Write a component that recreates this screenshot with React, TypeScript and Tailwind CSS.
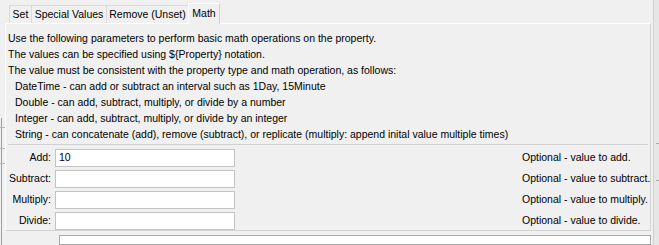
import React from "react";

const tabs = [
  { label: "Set", w: "w-[22px]" },
  { label: "Special Values", w: "w-[75px]" },
  { label: "Remove (Unset)", w: "w-[82px]" },
];

const lines = [
  { text: "Use the following parameters to perform basic math operations on the property.", indent: false },
  { text: "The values can be specified using ${Property} notation.", indent: false },
  { text: "The value must be consistent with the property type and math operation, as follows:", indent: false },
  { text: "DateTime - can add or subtract an interval such as 1Day, 15Minute", indent: true },
  { text: "Double - can add, subtract, multiply, or divide by a number", indent: true },
  { text: "Integer - can add, subtract, multiply, or divide by an integer", indent: true },
  {
    text: "String - can concatenate (add), remove (subtract), or replicate (multiply: append inital value multiple times)",
    indent: true,
  },
];

const fields = [
  { label: "Add:", value: "10", help: "Optional - value to add." },
  { label: "Subtract:", value: "", help: "Optional - value to subtract." },
  { label: "Multiply:", value: "", help: "Optional - value to multiply." },
  { label: "Divide:", value: "", help: "Optional - value to divide." },
];

export default function App() {
  return (
    <div className="relative w-[659px] h-[245px] overflow-hidden bg-[#f0f0f0] font-['Liberation_Sans',Arial,sans-serif] text-[10.5px] text-black">
      {/* window behind, left edge */}
      <div className="absolute left-[1px] top-[118px] bottom-0 w-px bg-[#a0a0a0]" />
      <div className="absolute left-0 top-[127px] w-[5px] h-px bg-[#b5b5b5]" />
      <div className="absolute left-0 top-[148px] w-[5px] h-px bg-[#b5b5b5]" />
      <div className="absolute left-0 top-[163px] w-[5px] h-px bg-[#b5b5b5]" />

      <div className="flex h-full">
        <div className="w-[5px] shrink-0" />

        <div className="w-[646px] shrink-0 flex flex-col">
          {/* tabs */}
          <div className="flex items-end pl-[4px] pt-[3px] h-[23px]">
            {tabs.map((t) => (
              <div
                key={t.label}
                className={`${t.w} h-[18px] border-t border-l border-[#d9d9d9] flex items-center justify-center leading-none whitespace-nowrap`}
              >
                {t.label}
              </div>
            ))}
            <div className="relative z-10 w-[32px] h-[21px] -mb-px border-t border-l border-r border-t-white border-l-white border-r-[#d0d0d0] bg-[#f0f0f0] flex items-center justify-center leading-none pb-[2px]">
              Math
            </div>
          </div>

          {/* panel */}
          <div className="h-[215px] border border-t-white border-l-white border-r-[#d4d4d4] border-b-[#d4d4d4] pt-[6px]">
            <div className="pl-[2px]">
              {lines.map((l) => (
                <div key={l.text} className={`h-[16px] leading-[16px] whitespace-nowrap ${l.indent ? "pl-[7px]" : ""}`}>
                  {l.text}
                </div>
              ))}
            </div>
            <div className="mt-[2px] mx-[2px] h-px bg-[#d0d0d0]" />
            <div className="mt-[4px] grid grid-cols-[45px_180px_1fr_128px] gap-x-[4px] gap-y-[3px]">
              {fields.map((f) => (
                <React.Fragment key={f.label}>
                  <div className="h-[18px] flex items-center justify-end">{f.label}</div>
                  <div className="h-[18px] bg-white border border-[#c3c3c3] flex items-center px-[3px]">
                    {f.value}
                  </div>
                  <div />
                  <div className="h-[18px] flex items-center whitespace-nowrap">{f.help}</div>
                </React.Fragment>
              ))}
            </div>
          </div>

          <div className="mt-[4px] ml-[54px] h-[20px] bg-white border border-[#a9a9a9]" />
        </div>

        {/* right edge */}
        <div className="w-[2px] shrink-0" />
        <div className="relative flex-1 bg-[#e6e6e6] border-l border-[#d0d0d0]">
          <div className="absolute left-[2px] right-0 top-[143px] h-px bg-[#a8a8a8]" />
          <div className="absolute left-[2px] right-0 top-[180px] h-px bg-[#a8a8a8]" />
        </div>
      </div>
    </div>
  );
}
